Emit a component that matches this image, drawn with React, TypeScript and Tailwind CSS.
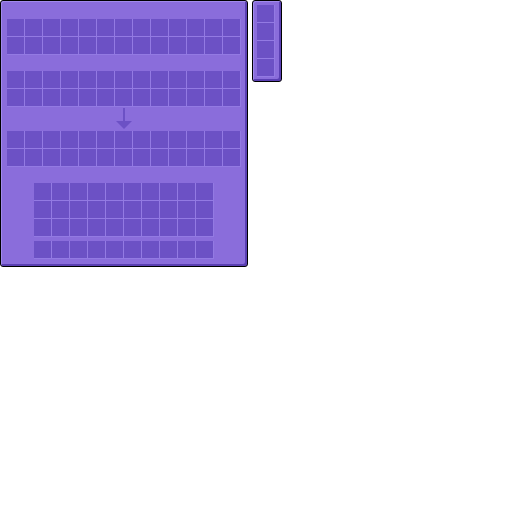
import React from 'react';

const Slot: React.FC = () => (
  <div className="w-[18px] h-[18px] box-border bg-[#6c51c5] border-r border-b border-[#937ae3]" />
);

const Grid: React.FC<{ cols: number; rows: number }> = ({ cols, rows }) => (
  <div className="flex flex-col">
    {Array.from({ length: rows }).map((_, r) => (
      <div key={r} className="flex">
        {Array.from({ length: cols }).map((_, c) => (
          <Slot key={c} />
        ))}
      </div>
    ))}
  </div>
);

const Arrow: React.FC = () => (
  <div className="w-[234px] h-[24px] flex justify-center">
    <svg width="16" height="22" viewBox="0 0 16 22" className="mt-[1px]">
      <rect x="7" y="0" width="2" height="14" fill="#6c51c5" />
      <polygon points="0,13 16,13 8,21" fill="#6c51c5" />
    </svg>
  </div>
);

export default function App() {
  return (
    <div className="flex items-start gap-[4px]">
      <div className="w-[248px] h-[267px] box-border border border-black rounded-[3px] bg-[#8a6ddb] shadow-[inset_1px_1px_0_#a08aec,inset_-2px_-2px_0_#5a3fb3] pl-[6px] pt-[18px] flex flex-col">
        <Grid cols={13} rows={2} />
        <div className="mt-[16px]">
          <Grid cols={13} rows={2} />
        </div>
        <Arrow />
        <Grid cols={13} rows={2} />
        <div className="mt-[16px] ml-[27px] flex flex-col gap-[4px]">
          <Grid cols={10} rows={3} />
          <Grid cols={10} rows={1} />
        </div>
      </div>
      <div className="w-[30px] h-[82px] box-border border border-black rounded-[3px] bg-[#8a6ddb] shadow-[inset_1px_1px_0_#a08aec,inset_-2px_-2px_0_#5a3fb3] pl-[4px] pt-[4px]">
        <Grid cols={1} rows={4} />
      </div>
    </div>
  );
}
